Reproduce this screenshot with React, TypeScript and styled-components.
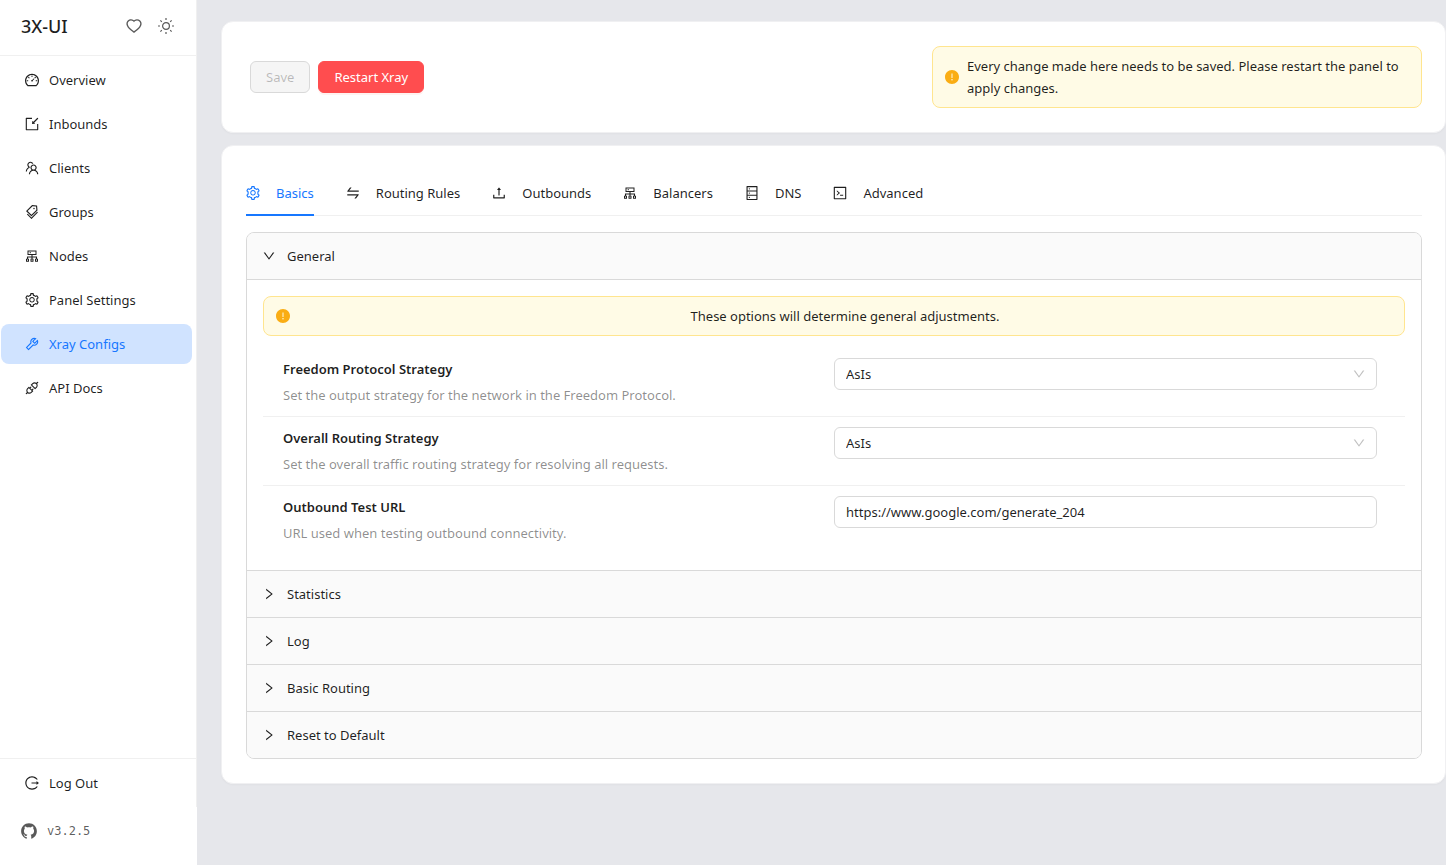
import React, { useState } from "react";
import styled, { createGlobalStyle } from "styled-components";
import {
  AiOutlineDashboard,
  AiOutlineImport,
  AiOutlineTeam,
  AiOutlineTags,
  AiOutlineCluster,
  AiOutlineSetting,
  AiOutlineTool,
  AiOutlineApi,
  AiOutlineLogout,
  AiFillGithub,
  AiOutlineHeart,
  AiOutlineSwap,
  AiOutlineUpload,
  AiOutlineDatabase,
  AiOutlineCode,
  AiOutlineDown,
  AiOutlineRight,
  AiFillExclamationCircle,
} from "react-icons/ai";

const ink = "rgba(0, 0, 0, 0.88)";
const muted = "rgba(0, 0, 0, 0.45)";
const blue = "#1677ff";
const line = "#d9d9d9";
const softLine = "#f0f0f0";

const GlobalStyle = createGlobalStyle`
  *, *::before, *::after { box-sizing: border-box; }
  body {
    margin: 0;
    background: #e6e7eb;
    color: ${ink};
    font-family: "Segoe UI", "Noto Sans", "Open Sans", sans-serif;
    font-size: 13px;
    line-height: 22px;
  }
  button, input, select { font: inherit; color: inherit; }
  svg { flex: none; }
`;

const Shell = styled.div`
  display: flex;
  min-height: 100vh;
`;

const Sidebar = styled.aside`
  position: sticky;
  top: 0;
  flex: 0 0 197px;
  display: flex;
  flex-direction: column;
  height: 100vh;
  background: #fff;
`;

const SidebarBody = styled.div`
  flex: 1;
  display: flex;
  flex-direction: column;
  border-right: 1px solid ${softLine};
`;

const Brand = styled.div`
  display: flex;
  align-items: center;
  justify-content: space-between;
  height: 56px;
  padding: 0 14px 4px 21px;
  border-bottom: 1px solid ${softLine};
`;

const BrandName = styled.span`
  font-size: 18px;
  font-weight: 500;
  line-height: 28px;
`;

const BrandActions = styled.div`
  display: flex;
`;

const IconButton = styled.button`
  display: grid;
  place-items: center;
  width: 32px;
  height: 32px;
  padding: 0;
  border: 0;
  background: none;
  color: rgba(0, 0, 0, 0.65);
  cursor: pointer;
`;

const Menu = styled.nav<{ $footer?: boolean }>`
  display: flex;
  flex-direction: column;
  gap: 4px;
  padding: 4px 4px 4px 1px;
  ${(p) => (p.$footer ? `border-top: 1px solid ${softLine};` : "flex: 1;")}
`;

const MenuItem = styled.a<{ $active?: boolean }>`
  display: flex;
  align-items: center;
  gap: 9px;
  height: 40px;
  padding: 0 23px;
  border-radius: 8px;
  text-decoration: none;
  color: ${(p) => (p.$active ? blue : ink)};
  background: ${(p) => (p.$active ? "#d0e3ff" : "transparent")};
`;

const Version = styled.a`
  display: flex;
  align-items: center;
  gap: 9px;
  height: 58px;
  padding: 0 20px 10px;
  color: rgba(0, 0, 0, 0.65);
  font-family: "DejaVu Sans Mono", monospace;
  font-size: 12px;
  text-decoration: none;
`;

const Main = styled.main`
  flex: 1;
  min-width: 0;
  display: flex;
  flex-direction: column;
  gap: 12px;
  padding: 21px 0 24px 24px;
`;

const Card = styled.section`
  padding: 24px 23px 24px 24px;
  background: #fff;
  border: 1px solid #f0f0f2;
  border-radius: 12px;
  box-shadow: 0 1px 2px rgba(0, 0, 0, 0.03);
`;

const ActionBar = styled.div`
  display: grid;
  grid-template-columns: 7fr 5fr;
  align-items: center;
`;

const Actions = styled.div`
  display: flex;
  gap: 8px;
  padding: 0 4px;
`;

const Button = styled.button<{ $danger?: boolean }>`
  height: 32px;
  padding: 0 15px;
  border: 1px solid ${(p) => (p.$danger ? "#ff4d4f" : line)};
  border-radius: 6px;
  background: ${(p) => (p.$danger ? "#ff4d4f" : "#f5f5f5")};
  color: ${(p) => (p.$danger ? "#fff" : "rgba(0, 0, 0, 0.25)")};
  box-shadow: ${(p) => (p.$danger ? "0 2px 0 rgba(255, 38, 5, 0.06)" : "none")};
  cursor: ${(p) => (p.disabled ? "not-allowed" : "pointer")};
`;

const Notice = styled.div<{ $centered?: boolean }>`
  display: flex;
  align-items: center;
  gap: 7px;
  padding: 8px 12px 8px 11px;
  border: 1px solid #ffe58f;
  border-radius: 8px;
  background: #fffbe6;

  svg {
    color: #faad14;
  }
  span {
    flex: 1;
    text-align: ${(p) => (p.$centered ? "center" : "left")};
  }
`;

const TabList = styled.div`
  display: flex;
  gap: 32px;
  height: 46px;
  margin-bottom: 16px;
  border-bottom: 1px solid ${softLine};
`;

const Tab = styled.button<{ $active: boolean }>`
  display: flex;
  align-items: center;
  gap: 15px;
  height: 46px;
  padding: 2px 0 0;
  border: 0;
  border-bottom: 2px solid ${(p) => (p.$active ? blue : "transparent")};
  background: none;
  color: ${(p) => (p.$active ? blue : ink)};
  white-space: nowrap;
  cursor: pointer;

  svg {
    margin-left: -1px;
  }
`;

const Collapse = styled.div`
  border: 1px solid ${line};
  border-radius: 8px;
  overflow: hidden;
`;

const Panel = styled.div`
  & + & {
    border-top: 1px solid ${line};
  }
`;

const PanelHeader = styled.button`
  display: flex;
  align-items: center;
  gap: 11px;
  width: 100%;
  padding: 12px 15px;
  border: 0;
  background: #fafafa;
  text-align: left;
  cursor: pointer;
`;

const PanelBody = styled.div`
  padding: 16px;
  border-top: 1px solid ${line};
`;

const Settings = styled.div`
  margin-top: 12px;
`;

const SettingRow = styled.div`
  display: grid;
  grid-template-columns: 1fr 1fr;
  padding: 10px 20px;

  & + & {
    border-top: 1px solid ${softLine};
  }
`;

const SettingText = styled.div`
  display: flex;
  flex-direction: column;
  gap: 4px;
`;

const SettingTitle = styled.label`
  font-weight: 600;
`;

const SettingHint = styled.span`
  color: ${muted};
`;

const Control = styled.div`
  position: relative;
  padding-right: 8px;

  svg {
    position: absolute;
    top: 9px;
    right: 19px;
    color: rgba(0, 0, 0, 0.25);
    pointer-events: none;
  }
`;

const fieldStyle = `
  display: block;
  width: 100%;
  height: 32px;
  padding: 0 11px;
  border: 1px solid ${line};
  border-radius: 6px;
  background: #fff;
  outline: none;
`;

const Select = styled.select`
  ${fieldStyle}
  appearance: none;
`;

const Input = styled.input`
  ${fieldStyle}
`;

const SunIcon = () => (
  <svg width="16" height="16" viewBox="0 0 16 16" fill="none" stroke="currentColor" strokeWidth="1.2">
    <circle cx="8" cy="8" r="3.4" />
    <path d="M8 0v2M8 14v2M0 8h2M14 8h2M2.4 2.4l1.4 1.4M12.2 12.2l1.4 1.4M2.4 13.6l1.4-1.4M12.2 3.8l1.4-1.4" />
  </svg>
);

const menu = [
  { label: "Overview", Icon: AiOutlineDashboard },
  { label: "Inbounds", Icon: AiOutlineImport },
  { label: "Clients", Icon: AiOutlineTeam },
  { label: "Groups", Icon: AiOutlineTags },
  { label: "Nodes", Icon: AiOutlineCluster },
  { label: "Panel Settings", Icon: AiOutlineSetting },
  { label: "Xray Configs", Icon: AiOutlineTool },
  { label: "API Docs", Icon: AiOutlineApi },
];

const tabs = [
  { label: "Basics", Icon: AiOutlineSetting },
  { label: "Routing Rules", Icon: AiOutlineSwap },
  { label: "Outbounds", Icon: AiOutlineUpload },
  { label: "Balancers", Icon: AiOutlineCluster },
  { label: "DNS", Icon: AiOutlineDatabase },
  { label: "Advanced", Icon: AiOutlineCode },
];

const strategies = ["AsIs", "UseIP", "UseIPv4", "UseIPv6"];

function StrategySelect({ id }: { id: string }) {
  return (
    <Control>
      <Select id={id} defaultValue="AsIs">
        {strategies.map((s) => (
          <option key={s}>{s}</option>
        ))}
      </Select>
      <AiOutlineDown size={14} />
    </Control>
  );
}

function GeneralSettings() {
  return (
    <>
      <Notice $centered role="alert">
        <AiFillExclamationCircle size={16} />
        <span>These options will determine general adjustments.</span>
      </Notice>
      <Settings>
        <SettingRow>
          <SettingText>
            <SettingTitle htmlFor="freedom">Freedom Protocol Strategy</SettingTitle>
            <SettingHint>Set the output strategy for the network in the Freedom Protocol.</SettingHint>
          </SettingText>
          <StrategySelect id="freedom" />
        </SettingRow>
        <SettingRow>
          <SettingText>
            <SettingTitle htmlFor="routing">Overall Routing Strategy</SettingTitle>
            <SettingHint>Set the overall traffic routing strategy for resolving all requests.</SettingHint>
          </SettingText>
          <StrategySelect id="routing" />
        </SettingRow>
        <SettingRow>
          <SettingText>
            <SettingTitle htmlFor="testUrl">Outbound Test URL</SettingTitle>
            <SettingHint>URL used when testing outbound connectivity.</SettingHint>
          </SettingText>
          <Control>
            <Input id="testUrl" type="text" defaultValue="https://www.google.com/generate_204" />
          </Control>
        </SettingRow>
      </Settings>
    </>
  );
}

const panels = ["General", "Statistics", "Log", "Basic Routing", "Reset to Default"];

export default function App() {
  const [tab, setTab] = useState("Basics");
  const [open, setOpen] = useState("General");

  return (
    <>
      <GlobalStyle />
      <Shell>
        <Sidebar>
          <SidebarBody>
            <Brand>
              <BrandName>3X-UI</BrandName>
              <BrandActions>
                <IconButton type="button" aria-label="Donate">
                  <AiOutlineHeart size={18} />
                </IconButton>
                <IconButton type="button" aria-label="Theme">
                  <SunIcon />
                </IconButton>
              </BrandActions>
            </Brand>
            <Menu>
              {menu.map(({ label, Icon }) => (
                <MenuItem key={label} href="#" $active={label === "Xray Configs"}>
                  <Icon size={16} />
                  {label}
                </MenuItem>
              ))}
            </Menu>
            <Menu $footer>
              <MenuItem href="#">
                <AiOutlineLogout size={16} />
                Log Out
              </MenuItem>
            </Menu>
          </SidebarBody>
          <Version href="#">
            <AiFillGithub size={18} />
            v3.2.5
          </Version>
        </Sidebar>

        <Main>
          <Card>
            <ActionBar>
              <Actions>
                <Button type="button" disabled>
                  Save
                </Button>
                <Button type="button" $danger>
                  Restart Xray
                </Button>
              </Actions>
              <Notice role="alert">
                <AiFillExclamationCircle size={16} />
                <span>Every change made here needs to be saved. Please restart the panel to apply changes.</span>
              </Notice>
            </ActionBar>
          </Card>

          <Card>
            <TabList role="tablist">
              {tabs.map(({ label, Icon }) => (
                <Tab
                  key={label}
                  type="button"
                  role="tab"
                  aria-selected={tab === label}
                  $active={tab === label}
                  onClick={() => setTab(label)}
                >
                  <Icon size={16} />
                  {label}
                </Tab>
              ))}
            </TabList>
            <Collapse>
              {panels.map((name) => {
                const expanded = open === name;
                return (
                  <Panel key={name}>
                    <PanelHeader
                      type="button"
                      aria-expanded={expanded}
                      onClick={() => setOpen(expanded ? "" : name)}
                    >
                      {expanded ? <AiOutlineDown size={14} /> : <AiOutlineRight size={14} />}
                      {name}
                    </PanelHeader>
                    {expanded && name === "General" && (
                      <PanelBody>
                        <GeneralSettings />
                      </PanelBody>
                    )}
                  </Panel>
                );
              })}
            </Collapse>
          </Card>
        </Main>
      </Shell>
    </>
  );
}
